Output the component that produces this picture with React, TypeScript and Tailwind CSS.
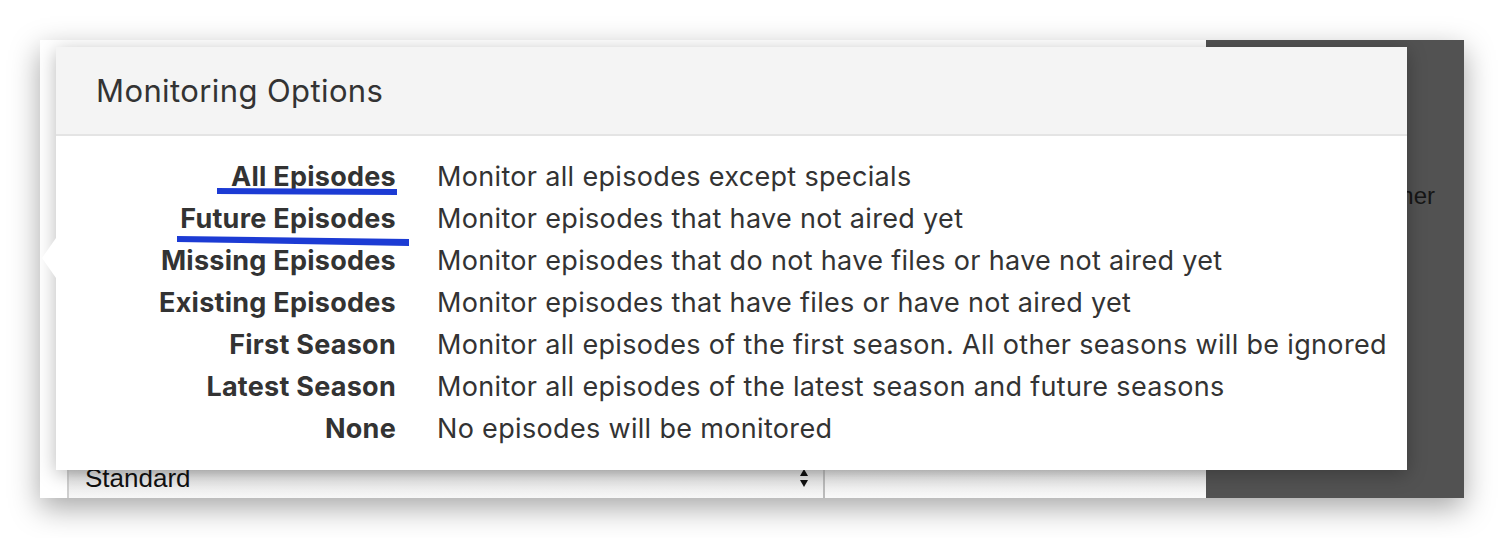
import React from "react";

const rows: [string, string][] = [
  ["All Episodes", "Monitor all episodes except specials"],
  ["Future Episodes", "Monitor episodes that have not aired yet"],
  ["Missing Episodes", "Monitor episodes that do not have files or have not aired yet"],
  ["Existing Episodes", "Monitor episodes that have files or have not aired yet"],
  ["First Season", "Monitor all episodes of the first season. All other seasons will be ignored"],
  ["Latest Season", "Monitor all episodes of the latest season and future seasons"],
  ["None", "No episodes will be monitored"],
];

export default function App() {
  return (
    <div className="relative w-[1504px] h-[538px] bg-white p-[40px] font-['Inter',sans-serif]">
      <div className="relative w-[1424px] h-[458px] flex overflow-hidden shadow-[0_10px_28px_rgba(0,0,0,0.35)]">
        {/* background page */}
        <div className="flex-1 bg-white flex flex-col justify-end pl-[27px]">
          <div className="flex h-[40px]">
            <div className="w-[758px] h-full flex items-center justify-between pl-[16px] pr-[14px] border-l-2 border-[#cfcfcf] border-r-2 border-r-[#bbbbbb] bg-gradient-to-b from-[#bdbdbd] via-[#e8e8e8] to-[#f7f7f7]">
              <span className="text-[26px] text-[#111] font-['Liberation_Sans',sans-serif] leading-[30px]">Standard</span>
              <svg width="10" height="26" viewBox="0 0 10 26" className="mt-[2px]">
                <path d="M1 10 L5 3 L9 10 Z" fill="#111" />
                <path d="M1 14 L9 14 L5 21 Z" fill="#111" />
              </svg>
            </div>
            <div className="flex-1 h-full bg-gradient-to-b from-[#c2c2c2] via-[#ebebeb] to-[#f9f9f9]" />
          </div>
        </div>
        <div className="w-[258px] bg-[#525252] pt-[144px] pr-[29px] text-right">
          <span className="text-[24px] text-[#161616] font-['Liberation_Sans',sans-serif] leading-none">Banner</span>
        </div>

        {/* popover */}
        <div className="absolute left-[16px] top-[7px] w-[1351px] h-[423px] bg-white shadow-[0_4px_18px_rgba(0,0,0,0.28)]">
          <div className="absolute left-[-14px] top-[191px] w-0 h-0 border-y-[20px] border-y-transparent border-r-[14px] border-r-white" />
          <div className="h-[89px] bg-[#f4f4f4] border-b-2 border-[#e4e4e4] flex items-center pl-[40px] pt-[2px]">
            <span className="text-[31px] text-[#333] tracking-[0.4px]">Monitoring Options</span>
          </div>
          <div className="pt-[20px] flex flex-col">
            {rows.map(([k, v]) => (
              <div key={k} className="flex h-[42px] items-center">
                <div className="w-[340px] text-right text-[27px] font-bold text-[#333] tracking-[0.26px] whitespace-nowrap">{k}</div>
                <div className="pl-[41px] text-[27px] text-[#333] tracking-[0.33px] whitespace-nowrap">{v}</div>
              </div>
            ))}
          </div>
        </div>
      </div>

      {/* annotations */}
      <svg className="absolute inset-0 pointer-events-none" width="1504" height="538" viewBox="0 0 1504 538">
        <polygon points="217,188 397,189 397,195 217,194" fill="#1c3bd4" />
        <polygon points="177,236 409,239 409,246 177,242" fill="#1c3bd4" />
      </svg>
    </div>
  );
}
